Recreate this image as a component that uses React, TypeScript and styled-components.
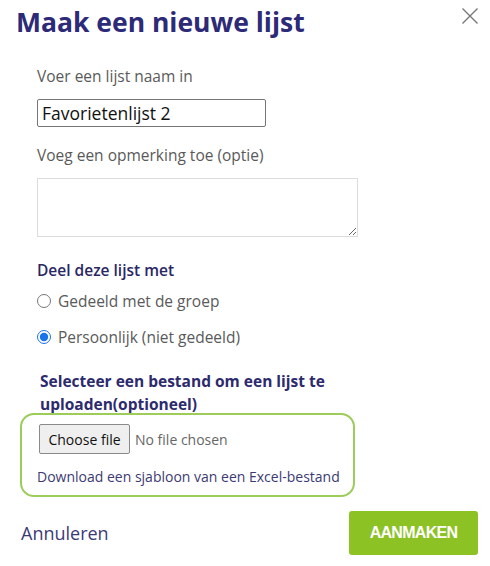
import React, { useState } from "react";
import styled, { createGlobalStyle } from "styled-components";

const GlobalStyle = createGlobalStyle`
  html, body {
    margin: 0;
    padding: 0;
    background: #fff;
    font-family: "Open Sans", "Noto Sans", sans-serif;
  }
  * { box-sizing: border-box; }
`;

const Dialog = styled.div`
  width: 490px;
  height: 566px;
  padding: 5px 11px 0 16px;
  display: flex;
  flex-direction: column;
`;

const Header = styled.div`
  display: flex;
  justify-content: space-between;
  align-items: flex-start;
`;

const Title = styled.h1`
  margin: 0;
  font-size: 26.5px;
  line-height: 34px;
  font-weight: 700;
  color: #2d2a78;
`;

const CloseButton = styled.button`
  border: none;
  background: none;
  padding: 0;
  margin-top: 2px;
  width: 18px;
  height: 18px;
  color: #777;
  cursor: pointer;
`;

const Body = styled.div`
  padding-left: 21px;
  display: flex;
  flex-direction: column;
`;

const Label = styled.label<{ $top: number }>`
  display: block;
  font-size: 15.5px;
  color: #5a5a5a;
  margin-top: ${(p) => p.$top}px;
`;

const TextInput = styled.input`
  width: 229px;
  height: 28px;
  margin-top: 12px;
  padding: 0 4px;
  border: 1px solid #767676;
  border-radius: 2px;
  font-family: inherit;
  font-size: 17.5px;
  color: #111;
  outline: none;
`;

const TextArea = styled.textarea`
  width: 321px;
  height: 59px;
  margin-top: 12px;
  border: 1px solid #dcdcdc;
  font-family: inherit;
  outline: none;
`;

const SectionTitle = styled.div`
  margin-top: 22px;
  font-size: 15.5px;
  font-weight: 600;
  color: #2a2764;
`;

const RadioRow = styled.label<{ $top: number }>`
  display: flex;
  align-items: center;
  gap: 7px;
  margin-top: ${(p) => p.$top}px;
  font-size: 15.5px;
  color: #5a5a5a;
`;

const Radio = styled.input`
  margin: 0;
  width: 14px;
  height: 14px;
  accent-color: #1a73e8;
`;

const UploadTitle = styled.div`
  margin-top: 22px;
  padding-left: 3px;
  width: 320px;
  font-size: 15.5px;
  line-height: 23px;
  font-weight: 700;
  color: #2d2a6e;
`;

const UploadBox = styled.div`
  margin: -3px 0 0 -17px;
  width: 335px;
  height: 84px;
  border: 2px solid #9dcc5a;
  border-radius: 14px;
  padding: 9px 0 0 15px;
`;

const FileRow = styled.div`
  display: flex;
  align-items: center;
  gap: 5px;
  padding-left: 2px;
`;

const FileButton = styled.label`
  display: inline-flex;
  align-items: center;
  justify-content: center;
  width: 91px;
  height: 30px;
  background: #efefef;
  border: 1px solid #8a8a8a;
  border-radius: 2px;
  font-size: 14px;
  color: #111;
  cursor: pointer;
`;

const HiddenFile = styled.input`
  display: none;
`;

const FileName = styled.span`
  font-size: 14px;
  color: #666;
`;

const DownloadLink = styled.a`
  display: block;
  margin-top: 13px;
  font-size: 14px;
  color: #3d3a72;
  text-decoration: none;
`;

const Footer = styled.div`
  margin-top: 14px;
  display: flex;
  justify-content: space-between;
  align-items: center;
  padding: 0 1px 0 5px;
`;

const CancelButton = styled.button`
  border: none;
  background: none;
  padding: 0;
  font-family: inherit;
  font-size: 18px;
  color: #3b3a78;
  cursor: pointer;
`;

const CreateButton = styled.button`
  width: 129px;
  height: 44px;
  border: none;
  border-radius: 3px;
  background: #8cc224;
  color: #fff;
  font-family: "Liberation Sans", Arial, sans-serif;
  font-weight: 700;
  font-size: 16px;
  letter-spacing: -0.7px;
  cursor: pointer;
`;

const App = () => {
  const [name, setName] = useState("Favorietenlijst 2");
  const [share, setShare] = useState("personal");

  return (
    <>
      <GlobalStyle />
      <Dialog>
        <Header>
          <Title>Maak een nieuwe lijst</Title>
          <CloseButton aria-label="Sluiten">
            <svg width="18" height="18" viewBox="0 0 18 18" fill="none" stroke="currentColor" strokeWidth="1.4">
              <path d="M1.5 1.5L16.5 16.5M16.5 1.5L1.5 16.5" />
            </svg>
          </CloseButton>
        </Header>
        <Body>
          <Label $top={26}>Voer een lijst naam in</Label>
          <TextInput value={name} onChange={(e) => setName(e.target.value)} />
          <Label $top={17}>Voeg een opmerking toe (optie)</Label>
          <TextArea />
          <SectionTitle>Deel deze lijst met</SectionTitle>
          <RadioRow $top={9}>
            <Radio
              type="radio"
              name="share"
              checked={share === "group"}
              onChange={() => setShare("group")}
            />
            Gedeeld met de groep
          </RadioRow>
          <RadioRow $top={14}>
            <Radio
              type="radio"
              name="share"
              checked={share === "personal"}
              onChange={() => setShare("personal")}
            />
            Persoonlijk (niet gedeeld)
          </RadioRow>
          <UploadTitle>Selecteer een bestand om een lijst te uploaden(optioneel)</UploadTitle>
          <UploadBox>
            <FileRow>
              <FileButton>
                Choose file
                <HiddenFile type="file" />
              </FileButton>
              <FileName>No file chosen</FileName>
            </FileRow>
            <DownloadLink href="#">Download een sjabloon van een Excel-bestand</DownloadLink>
          </UploadBox>
        </Body>
        <Footer>
          <CancelButton>Annuleren</CancelButton>
          <CreateButton>AANMAKEN</CreateButton>
        </Footer>
      </Dialog>
    </>
  );
};

export default App;
